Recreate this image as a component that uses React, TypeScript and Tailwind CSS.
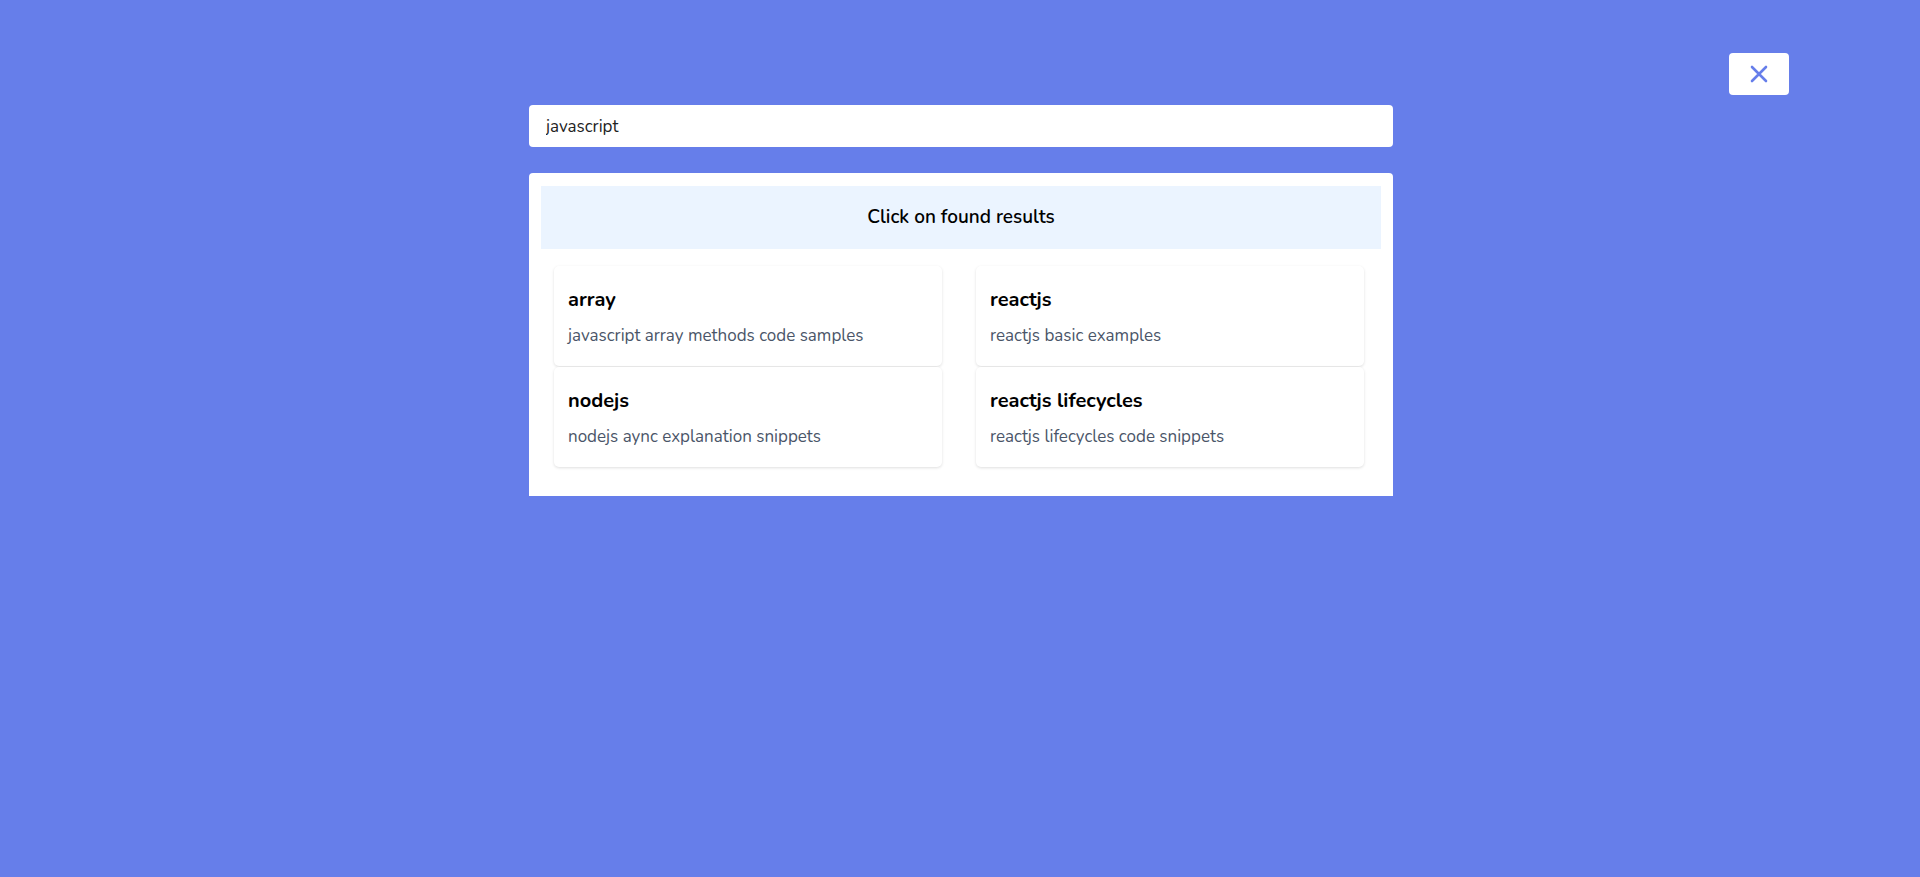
import React from 'react';

// search results shown in the overlay
const results = [
  { id: 1, title: 'array', description: 'javascript array methods code samples' },
  { id: 2, title: 'reactjs', description: 'reactjs basic examples' },
  { id: 3, title: 'nodejs', description: 'nodejs aync explanation snippets' },
  { id: 4, title: 'reactjs lifecycles', description: 'reactjs lifecycles code snippets' },
];

function CloseIcon() {
  return (
    <svg width="18" height="18" viewBox="0 0 18 18" fill="none" stroke="#667eea" strokeWidth="2.6" strokeLinecap="round">
      <path d="M2 2l14 14M16 2L2 16" />
    </svg>
  );
}

export default function App() {
  return (
    <div
      className="min-h-screen bg-[#667eea] relative"
      style={{ fontFamily: 'Nunito, Lato, "Open Sans", sans-serif' }}
    >
      {/* Close button */}
      <button className="absolute top-[53px] left-[1729px] w-[60px] h-[42px] bg-white rounded-[4px] flex items-center justify-center">
        <CloseIcon />
      </button>

      <div className="w-[864px] ml-[529px] pt-[105px]">
        {/* Search input */}
        <input
          className="w-full h-[42px] bg-white rounded-[4px] px-[17px] text-[17px] text-[#222] outline-none"
          defaultValue="javascript"
        />

        {/* Results */}
        <div className="mt-[26px] bg-white rounded-t-[4px] pt-[13px] px-[12px] pb-[29px]">
          <div className="h-[63px] bg-[#ebf4ff] flex items-center justify-center">
            <h2 className="text-[19px] font-semibold text-black">Click on found results</h2>
          </div>

          <div className="mt-[17px] pl-[13px] grid grid-cols-[388px_388px] gap-x-[34px] gap-y-[1px]">
            {results.map((r) => (
              <div
                key={r.id}
                className="h-[100px] bg-white rounded-[5px] shadow-[0_1px_3px_rgba(0,0,0,0.13)] px-[14px] pt-[20px]"
              >
                <h3 className="text-[20px] leading-[28px] font-bold text-black">{r.title}</h3>
                <p className="mt-[11px] text-[17px] leading-[22px] text-[#4a5568]">{r.description}</p>
              </div>
            ))}
          </div>
        </div>
      </div>
    </div>
  );
}
